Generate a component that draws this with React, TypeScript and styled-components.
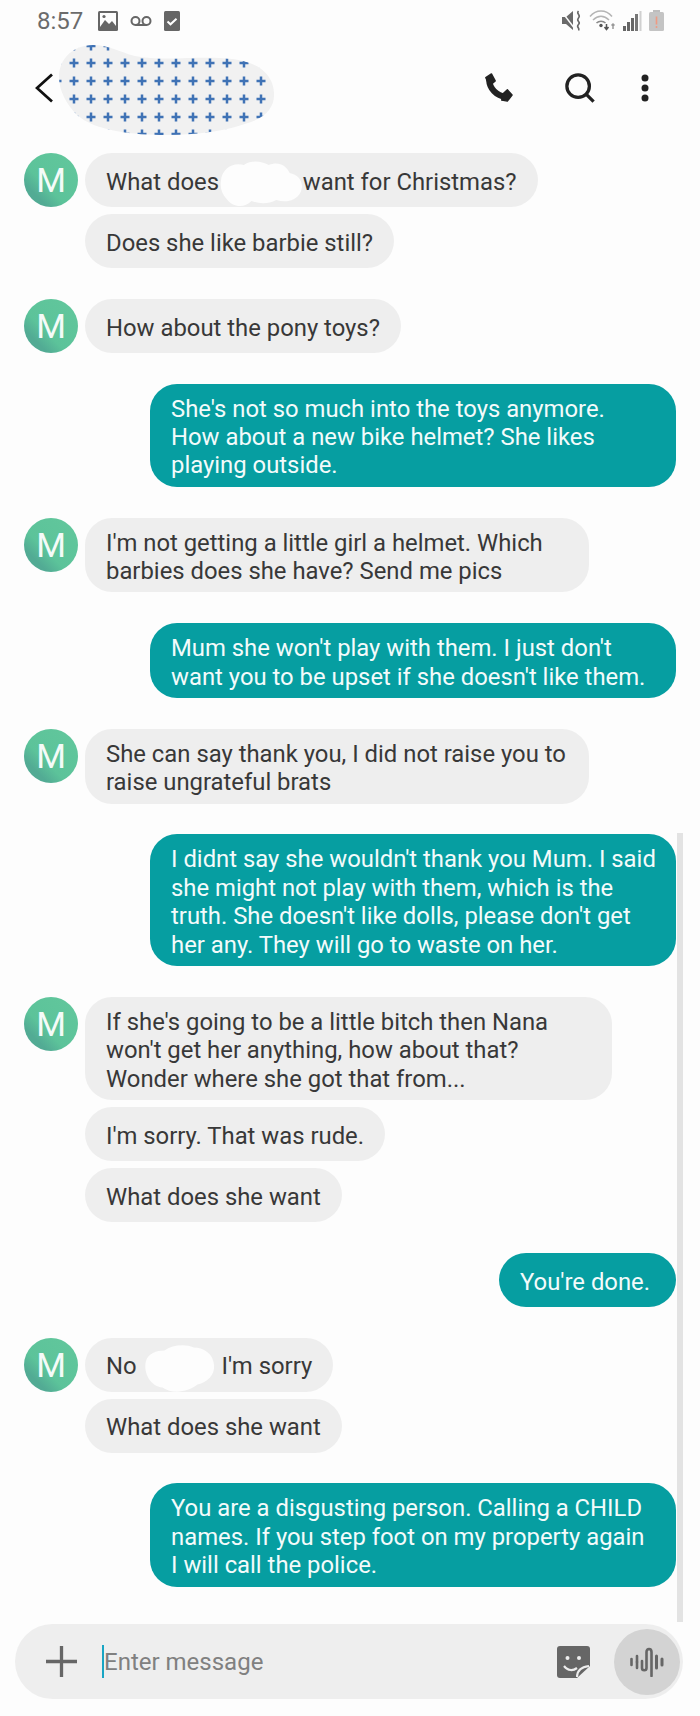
import React from "react";
import styled, { createGlobalStyle } from "styled-components";

const GlobalStyle = createGlobalStyle`
  html, body {
    margin: 0;
    padding: 0;
    background: #fdfdfd;
  }
`;

const Screen = styled.div`
  position: relative;
  width: 700px;
  height: 1716px;
  overflow: hidden;
  background: #fdfdfd;
  font-family: Roboto, "Liberation Sans", sans-serif;
  color: #383838;
`;

const StatusBar = styled.div`
  display: flex;
  align-items: center;
  justify-content: space-between;
  height: 45px;
  padding: 0 36px 4px 37px;
  box-sizing: border-box;
  color: #666;
`;

const StatusGroup = styled.div`
  display: flex;
  align-items: center;
  gap: ${(p: { $gap: number }) => p.$gap}px;
`;

const Clock = styled.span`
  font-size: 24px;
  margin-right: 3px;
  color: #6b6b6b;
`;

const AppBar = styled.div`
  display: flex;
  align-items: center;
  height: 90px;
  padding-left: 35px;
  padding-right: 51px;
`;

const BackSlot = styled.div`
  display: flex;
  margin-bottom: 4px;
`;

const NameBlob = styled.svg`
  margin-left: 6px;
  flex: none;
`;

const BarActions = styled.div`
  display: flex;
  align-items: center;
  margin-left: auto;
  margin-top: -5px;
`;

const Thread = styled.div`
  display: flex;
  flex-direction: column;
  gap: 30.8px;
  padding-top: 18px;
`;

const InRow = styled.div`
  display: flex;
  gap: 7px;
  padding-left: 24px;
`;

const Avatar = styled.div`
  width: 54px;
  height: 54px;
  flex: none;
  border-radius: 50%;
  display: flex;
  align-items: center;
  justify-content: center;
  color: #f4fbf8;
  font-size: 34px;
  font-weight: 400;
  background: linear-gradient(45deg, #52ab94 0%, #52ab94 22%, #5cc39a 40%, #62c79c 100%);
`;

const Stack = styled.div`
  display: flex;
  flex-direction: column;
  align-items: flex-start;
  gap: 7px;
`;

const Bubble = styled.div<{ $out?: boolean; $width?: number }>`
  min-height: 54px;
  box-sizing: border-box;
  display: flex;
  align-items: center;
  padding: 11px 21px 7px;
  border-radius: 27px;
  font-size: 23.85px;
  line-height: 28.4px;
  white-space: nowrap;
  width: ${(p) => (p.$width ? `${p.$width}px` : "auto")};
  background: ${(p) => (p.$out ? "#069ea1" : "#eeeeee")};
  color: ${(p) => (p.$out ? "#f3fbfb" : "#383838")};
  align-self: ${(p) => (p.$out ? "flex-end" : "auto")};
  margin-right: ${(p) => (p.$out ? "24px" : "0")};
`;

const Redact = styled.span<{ $width: number }>`
  position: relative;
  display: inline-block;
  width: ${(p) => p.$width}px;
  height: 1px;
`;

const RedactShape = styled.svg<{ $left: number; $top: number }>`
  position: absolute;
  left: ${(p) => p.$left}px;
  top: ${(p) => p.$top}px;
`;

const Composer = styled.div`
  position: absolute;
  left: 15px;
  top: 1624px;
  width: 668px;
  height: 75px;
  border-radius: 38px;
  background: #eeeeee;
  display: flex;
  align-items: center;
  padding-left: 31px;
  box-sizing: border-box;
`;

const Caret = styled.span`
  width: 2px;
  height: 33px;
  margin-left: 25px;
  background: #18a5c4;
`;

const Placeholder = styled.span`
  flex: 1;
  font-size: 24px;
  color: #808080;
`;

const MicButton = styled.div`
  width: 66px;
  height: 66px;
  border-radius: 50%;
  background: #d3d3d3;
  display: flex;
  align-items: center;
  justify-content: center;
  margin: 0 3px 0 24px;
`;

const ScrollThumb = styled.div`
  position: absolute;
  left: 677px;
  top: 833px;
  width: 6px;
  height: 789px;
  background: #e3e3e3;
`;

const plusRows = [46, 63, 81, 99, 117, 134];
const plusCols = Array.from({ length: 13 }, (_, i) => 57 + i * 17);

const ContactName = () => (
  <NameBlob width="222" height="90" viewBox="0 0 222 90">
    <defs>
      <clipPath id="nameClip">
        <path d="M0 32C0 14 14 0 34 0C50 0 60 7 76 11C100 16 130 12 160 13C186 14 206 20 213 38C219 56 212 70 192 77C170 85 142 90 108 90C74 90 36 86 18 70C8 60 0 46 0 32Z" />
      </clipPath>
    </defs>
    <g clipPath="url(#nameClip)">
      <rect width="222" height="90" fill="#f1f1f1" />
      {plusRows.map((y) =>
        plusCols.map((x) => (
          <path
            key={`${x}-${y}`}
            d={`M${x - 59 - 4.5} ${y - 45}h9M${x - 59} ${y - 45 - 4.5}v9`}
            stroke="#3f72b5"
            strokeWidth="2.5"
          />
        ))
      )}
    </g>
  </NameBlob>
);

const Smudge = ({ wide }: { wide?: boolean }) =>
  wide ? (
    <RedactShape $left={-6} $top={-30} width="86" height="50" viewBox="0 0 90 50" preserveAspectRatio="none">
      <path
        d="M2 22C3 10 14 3 26 6C34 1 44 2 52 6C62 2 70 6 74 14C84 16 90 24 85 34C80 42 70 44 60 41C50 46 40 44 34 42C26 50 14 48 8 40C3 35 1 29 2 22Z"
        fill="#fdfdfd"
      />
    </RedactShape>
  ) : (
    <RedactShape $left={0} $top={-30} width="74" height="52" viewBox="0 0 76 52">
      <path
        d="M3 18C5 10 14 7 22 7C30 1 44 0 52 4C62 4 72 10 73 22C74 32 66 40 56 42C46 50 30 52 20 45C8 44 0 30 3 18Z"
        fill="#fdfdfd"
      />
    </RedactShape>
  );

const ImageIcon = () => (
  <svg width="20" height="20" viewBox="0 0 20 20">
    <rect width="20" height="20" rx="1.5" fill="#666" />
    <rect x="2" y="2" width="16" height="14" fill="#fdfdfd" />
    <path d="M2 16L7 9l4 4 3-3 4 5v1z" fill="#666" />
    <circle cx="6" cy="5.5" r="1.6" fill="#666" />
  </svg>
);

const VoicemailIcon = () => (
  <svg width="22" height="12" viewBox="0 0 22 12" fill="none" stroke="#666" strokeWidth="2">
    <circle cx="5.5" cy="6" r="4" />
    <circle cx="16.5" cy="6" r="4" />
    <path d="M5.5 10h11" />
  </svg>
);

const CheckIcon = () => (
  <svg width="16" height="20" viewBox="0 0 16 20">
    <rect width="16" height="20" rx="1.5" fill="#666" />
    <path d="M3.5 10.5l3 2.8 6-5.6" fill="none" stroke="#fff" strokeWidth="2" />
  </svg>
);

const MuteIcon = () => (
  <svg width="21" height="21" viewBox="0 0 21 21" fill="none">
    <path d="M1 7h4l7-6v19l-7-6H1z" fill="#6a6a6a" />
    <path d="M1 2l13 17" stroke="#fdfdfd" strokeWidth="1.4" />
    <path d="M17.5 1c-3 3 3 3.500 0 7s3 3.500 0 6.500 2 3 0 6" stroke="#6a6a6a" strokeWidth="1.6" />
  </svg>
);

const WifiIcon = () => (
  <svg width="27" height="21" viewBox="0 0 27 21" fill="none" stroke="#b4b4b4" strokeWidth="1.5">
    <path d="M1 6.500C7-1 17-1 23 6.500" />
    <path d="M4 10C9 5 15 5 20 10" />
    <path d="M7.500 13C10 10.500 14 10.500 16.500 13" stroke="#8a8a8a" />
    <circle cx="12" cy="15.500" r="1.700" fill="#555" stroke="none" />
    <path d="M17.500 14v5M15.500 17l2 2.500 2-2.500" stroke="#555" />
    <path d="M24 19v-5M22.500 15.500l1.500-1.500 1.500 1.500" stroke="#999" />
  </svg>
);

const SignalIcon = () => (
  <svg width="19" height="20" viewBox="0 0 19 20">
    <rect x="0" y="15" width="3" height="5" fill="#666" />
    <rect x="4" y="11" width="3" height="9" fill="#666" />
    <rect x="8" y="7" width="3" height="13" fill="#666" />
    <rect x="12" y="3" width="3" height="17" fill="#777" />
    <rect x="16.500" y="0" width="2" height="20" fill="#d0d0d0" />
  </svg>
);

const BatteryIcon = () => (
  <svg width="15" height="21" viewBox="0 0 15 21">
    <rect x="4" y="0" width="7" height="3" fill="#bdbdbd" />
    <rect x="0" y="2" width="15" height="19" rx="1.500" fill="#c4c4c4" />
    <path d="M7.500 6.500v8" stroke="#ef9a82" strokeWidth="1.600" />
    <circle cx="7.500" cy="17" r="1" fill="#ef9a82" />
  </svg>
);

const BackIcon = () => (
  <svg width="18" height="30" viewBox="0 0 18 30" fill="none" stroke="#111" strokeWidth="2.800">
    <path d="M17 1.500L2 15l15 13.500" />
  </svg>
);

const PhoneIcon = () => (
  <svg width="30" height="31" viewBox="0 0 32 32" style={{ marginRight: 52 }}>
    <path d="M6.500 7.500C7 17 14 25 24.500 26" fill="none" stroke="#222" strokeWidth="6.500" />
    <path d="M3 5.500L9 1.500l4 7.500-6 5zM20.500 23.500l5.500-5 5 5.500-5 6.500-6-1z" fill="#222" strokeLinejoin="round" stroke="#222" strokeWidth="1.500" />
  </svg>
);

const SearchIcon = () => (
  <svg width="30" height="30" viewBox="0 0 32 32" fill="none" stroke="#222" strokeWidth="3.500" style={{ marginRight: 46 }}>
    <circle cx="14" cy="14" r="12" />
    <path d="M22.500 22.500l8 8" />
  </svg>
);

const DotsIcon = () => (
  <svg width="8" height="28" viewBox="0 0 8 28" fill="#222">
    <circle cx="4" cy="4" r="3.500" />
    <circle cx="4" cy="14" r="3.500" />
    <circle cx="4" cy="24" r="3.500" />
  </svg>
);

const PlusIcon = () => (
  <svg width="31" height="31" viewBox="0 0 31 31" stroke="#666" strokeWidth="3.300">
    <path d="M0 15.500h31M15.500 0v31" />
  </svg>
);

const StickerIcon = () => (
  <svg width="33" height="32" viewBox="0 0 33 32">
    <path d="M3 0h27a3 3 0 0 1 3 3v17L20 32H3a3 3 0 0 1-3-3V3a3 3 0 0 1 3-3z" fill="#666" />
    <circle cx="10.500" cy="12" r="2" fill="#eee" />
    <circle cx="22" cy="12" r="2" fill="#eee" />
    <path d="M7 20c4 5 9 5 13 2" fill="none" stroke="#eee" strokeWidth="2.200" />
    <path d="M20 31c0-6 4-10 12-11" fill="none" stroke="#eee" strokeWidth="2" />
  </svg>
);

const WaveIcon = () => (
  <svg width="34" height="30" viewBox="0 0 34 30" fill="none" stroke="#666" strokeWidth="2.600" strokeLinecap="round">
    <path d="M1.500 12v6M7 9v12" />
    <path d="M7 15h0M12 14v7c0 3 4.500 3 4.500 0V5c0-4 5-4 5 0v24" />
    <path d="M26.500 9v12M32 12v6" strokeWidth="3" />
  </svg>
);

const App = () => {
  return (
    <Screen>
      <GlobalStyle />
      <StatusBar>
        <StatusGroup $gap={12}>
          <Clock>8:57</Clock>
          <ImageIcon />
          <VoicemailIcon />
          <CheckIcon />
        </StatusGroup>
        <StatusGroup $gap={7}>
          <MuteIcon />
          <WifiIcon />
          <SignalIcon />
          <BatteryIcon />
        </StatusGroup>
      </StatusBar>

      <AppBar>
        <BackSlot>
          <BackIcon />
        </BackSlot>
        <ContactName />
        <BarActions>
          <PhoneIcon />
          <SearchIcon />
          <DotsIcon />
        </BarActions>
      </AppBar>

      <Thread>
        <InRow>
          <Avatar>M</Avatar>
          <Stack>
            <Bubble>
              <span>
                What does <Redact $width={72}><Smudge wide /></Redact> want for Christmas?
              </span>
            </Bubble>
            <Bubble>Does she like barbie still?</Bubble>
          </Stack>
        </InRow>

        <InRow>
          <Avatar>M</Avatar>
          <Stack>
            <Bubble>How about the pony toys?</Bubble>
          </Stack>
        </InRow>

        <Bubble $out $width={526}>
          <span>
            She's not so much into the toys anymore.
            <br />
            How about a new bike helmet? She likes
            <br />
            playing outside.
          </span>
        </Bubble>

        <InRow>
          <Avatar>M</Avatar>
          <Stack>
            <Bubble $width={504}>
              <span>
                I'm not getting a little girl a helmet. Which
                <br />
                barbies does she have? Send me pics
              </span>
            </Bubble>
          </Stack>
        </InRow>

        <Bubble $out $width={526}>
          <span>
            Mum she won't play with them. I just don't
            <br />
            want you to be upset if she doesn't like them.
          </span>
        </Bubble>

        <InRow>
          <Avatar>M</Avatar>
          <Stack>
            <Bubble $width={504}>
              <span>
                She can say thank you, I did not raise you to
                <br />
                raise ungrateful brats
              </span>
            </Bubble>
          </Stack>
        </InRow>

        <Bubble $out $width={526}>
          <span>
            I didnt say she wouldn't thank you Mum. I said
            <br />
            she might not play with them, which is the
            <br />
            truth. She doesn't like dolls, please don't get
            <br />
            her any. They will go to waste on her.
          </span>
        </Bubble>

        <InRow>
          <Avatar>M</Avatar>
          <Stack>
            <Bubble $width={527}>
              <span>
                If she's going to be a little bitch then Nana
                <br />
                won't get her anything, how about that?
                <br />
                Wonder where she got that from...
              </span>
            </Bubble>
            <Bubble>I'm sorry. That was rude.</Bubble>
            <Bubble>What does she want</Bubble>
          </Stack>
        </InRow>

        <Bubble $out $width={177}>You're done.</Bubble>

        <InRow>
          <Avatar>M</Avatar>
          <Stack>
            <Bubble>
              <span>
                No <Redact $width={73}><Smudge /></Redact> I'm sorry
              </span>
            </Bubble>
            <Bubble>What does she want</Bubble>
          </Stack>
        </InRow>

        <Bubble $out $width={526}>
          <span>
            You are a disgusting person. Calling a CHILD
            <br />
            names. If you step foot on my property again
            <br />
            I will call the police.
          </span>
        </Bubble>
      </Thread>

      <ScrollThumb />

      <Composer>
        <PlusIcon />
        <Caret />
        <Placeholder>Enter message</Placeholder>
        <StickerIcon />
        <MicButton>
          <WaveIcon />
        </MicButton>
      </Composer>
    </Screen>
  );
};

export default App;
